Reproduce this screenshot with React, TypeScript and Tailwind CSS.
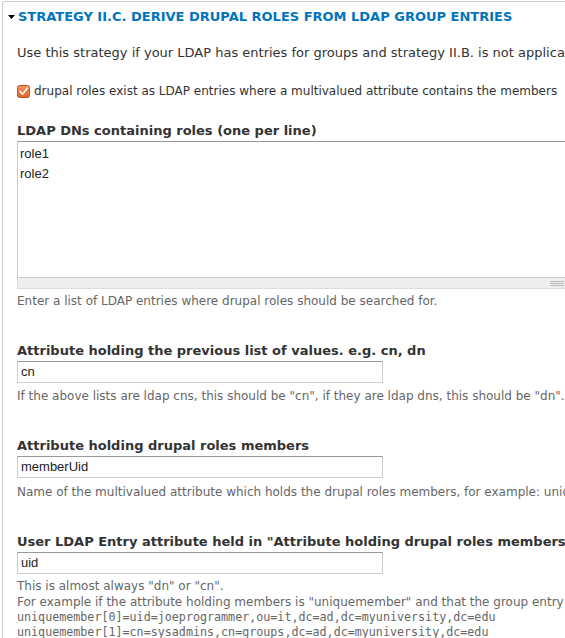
import type { ReactNode } from "react"

const sans = "font-['DejaVu_Sans',sans-serif]"
const field = "font-['Liberation_Sans',Arial,sans-serif]"

function Label({ children }: { children: ReactNode }) {
  return <div className="text-[13px] font-bold leading-[18px] text-[#333] whitespace-nowrap">{children}</div>
}

function Description({ children, className = "" }: { children: ReactNode; className?: string }) {
  return <div className={`leading-[16px] text-[#666] whitespace-nowrap ${className}`}>{children}</div>
}

function TextField({ value }: { value: string }) {
  return (
    <div
      className={`mt-px h-[22px] w-[366px] border border-[#ccc] border-t-[#999] bg-white pl-[3px] text-[13px] leading-[20px] text-[#222] ${field}`}
    >
      {value}
    </div>
  )
}

function CheckedBox() {
  return (
    <svg width="13" height="13" viewBox="0 0 13 13" className="shrink-0">
      <defs>
        <linearGradient id="cb" x1="0" y1="0" x2="0" y2="1">
          <stop offset="0" stopColor="#f5935f" />
          <stop offset="1" stopColor="#e0652f" />
        </linearGradient>
      </defs>
      <rect x="0.5" y="0.5" width="12" height="12" rx="2" fill="url(#cb)" stroke="#b9552b" />
      <path d="M3 6.5 L5.5 9.2 L10.3 3.2" fill="none" stroke="#fdf1ea" strokeWidth="1.7" strokeLinecap="round" strokeLinejoin="round" />
    </svg>
  )
}

export default function App() {
  return (
    <div className={`relative h-[638px] w-[565px] overflow-hidden bg-white text-[12px] ${sans}`}>
      {/* Fieldset: only its top and left edges fall inside the view */}
      <div className="ml-[2px] mt-px w-[1200px] rounded-tl-[3px] border-l border-t border-[#ccc] pl-[14px]">
        {/* Legend */}
        <div className="-ml-[9px] mt-[6px] flex h-[18px] items-center">
          <svg width="7" height="4" viewBox="0 0 7 4" className="shrink-0">
            <polygon points="0,0 7,0 3.5,4" fill="#000" />
          </svg>
          <span className="ml-[3px] text-[13px] font-bold uppercase leading-[18px] text-[#0074bd] whitespace-nowrap">
            Strategy II.C. Derive drupal roles from LDAP group entries
          </span>
        </div>

        <div className="mt-[18px] text-[13px] leading-[18px] text-[#333] whitespace-nowrap">
          Use this strategy if your LDAP has entries for groups and strategy II.B. is not applicable.
        </div>

        <div className="mt-[20px] flex h-[18px] items-center gap-[4px] text-[#333] whitespace-nowrap">
          <CheckedBox />
          <span>drupal roles exist as LDAP entries where a multivalued attribute contains the members</span>
        </div>

        {/* Role DNs textarea */}
        <div className="mt-[22px]">
          <Label>LDAP DNs containing roles (one per line)</Label>
          <div className="mt-px w-[560px]">
            <div
              className={`h-[137px] border border-[#ccc] border-t-[#999] pl-[2px] pt-[2px] text-[13px] leading-[20px] text-[#222] ${field}`}
            >
              <div>role1</div>
              <div>role2</div>
            </div>
            <div className="flex h-[11px] justify-end border-x border-b border-[#ddd] bg-[#eee] pr-[12px] pt-[3px]">
              <div className="flex w-[14px] flex-col gap-[1px]">
                <div className="h-px bg-[#bbb]" />
                <div className="h-px bg-[#bbb]" />
                <div className="h-px bg-[#bbb]" />
              </div>
            </div>
          </div>
          <Description className="mt-[4px]">Enter a list of LDAP entries where drupal roles should be searched for.</Description>
        </div>

        <div className="mt-[33px]">
          <Label>Attribute holding the previous list of values. e.g. cn, dn</Label>
          <TextField value="cn" />
          <Description className="mt-[5px]">
            If the above lists are ldap cns, this should be "cn", if they are ldap dns, this should be "dn".
          </Description>
        </div>

        <div className="mt-[33px]">
          <Label>Attribute holding drupal roles members</Label>
          <TextField value="memberUid" />
          <Description className="mt-[6px]">
            Name of the multivalued attribute which holds the drupal roles members, for example: uniquemember, memberUid
          </Description>
        </div>

        <div className="mt-[33px]">
          <Label>User LDAP Entry attribute held in "Attribute holding drupal roles members"</Label>
          <TextField value="uid" />
          <Description className="mt-[4px]">
            <div>This is almost always "dn" or "cn".</div>
            <div>
              For example if the attribute holding members is "uniquemember" and that the group entry has the following uniquemember values:
            </div>
            <div className="font-['DejaVu_Sans_Mono',monospace] text-[11.7px] leading-[15px]">
              <div>uniquemember[0]=uid=joeprogrammer,ou=it,dc=ad,dc=myuniversity,dc=edu</div>
              <div>uniquemember[1]=cn=sysadmins,cn=groups,dc=ad,dc=myuniversity,dc=edu</div>
            </div>
          </Description>
        </div>
      </div>
    </div>
  )
}
